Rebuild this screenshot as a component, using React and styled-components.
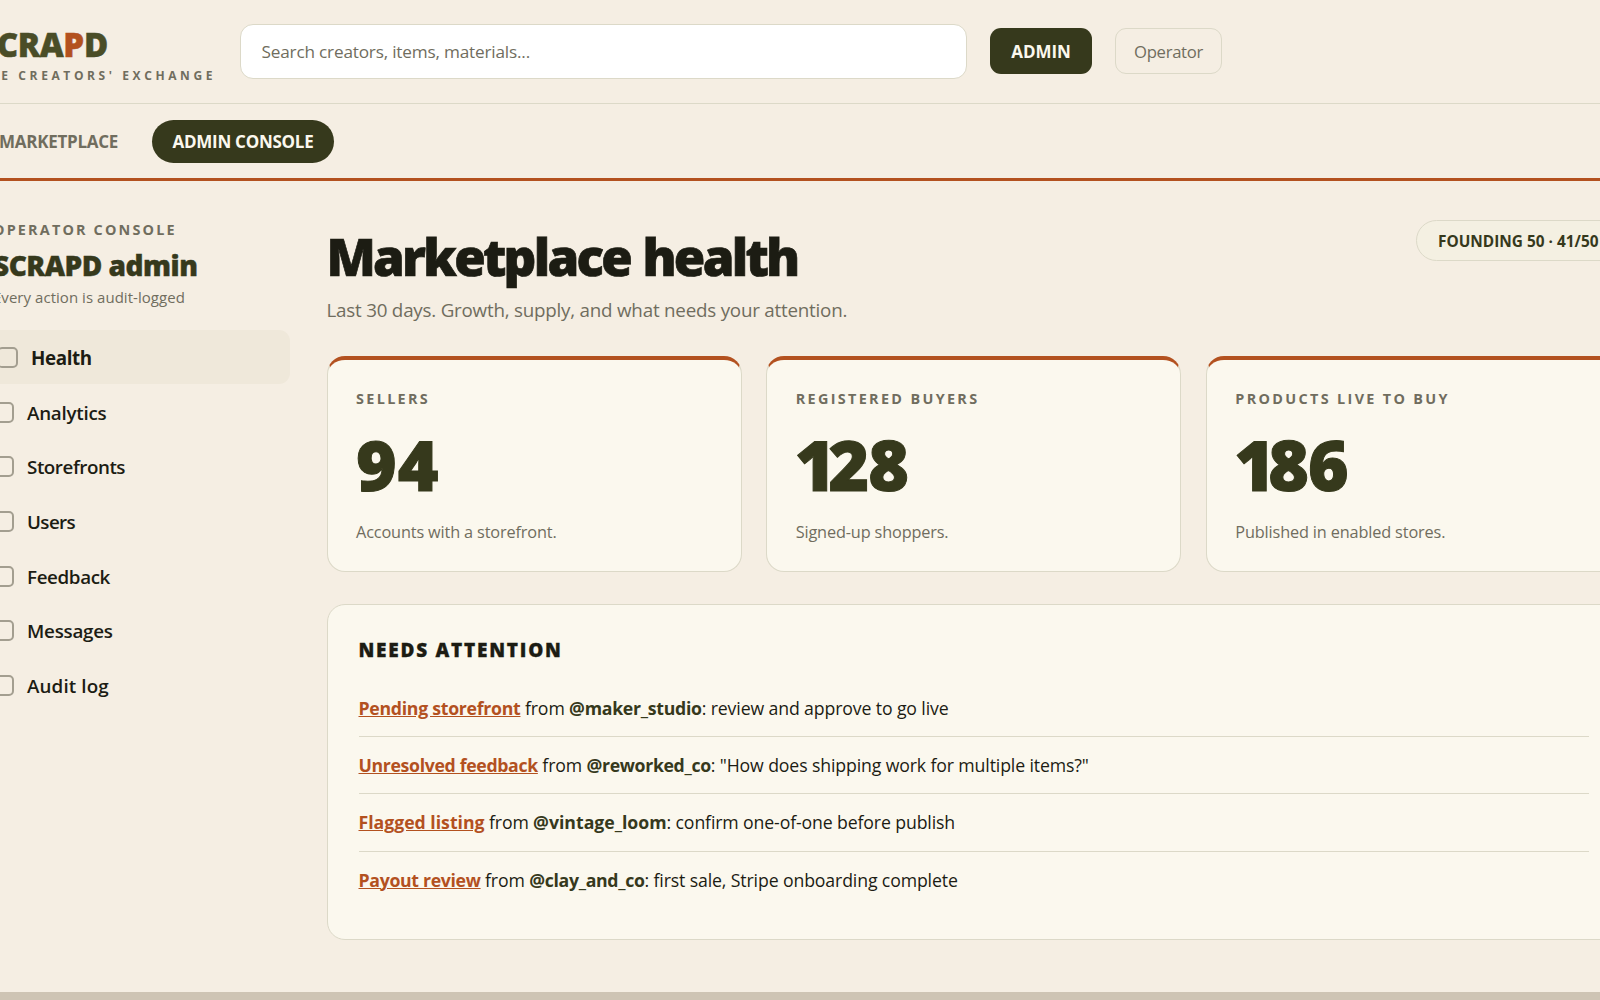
import React from 'react';
import styled, { createGlobalStyle, css } from 'styled-components';

const c = {
  bg: '#f5eee3',
  card: '#fbf8ee',
  ink: '#1c1c13',
  olive: '#36391c',
  moss: '#4a4d27',
  rust: '#b3511f',
  muted: '#706d5e',
  line: '#dcd9c8',
};

const Global = createGlobalStyle`
  *, *::before, *::after { box-sizing: border-box; }
  body {
    margin: 0;
    background: ${c.bg};
    color: ${c.ink};
    font-family: "Open Sans", "Noto Sans", sans-serif;
    overflow: hidden;
  }
`;

const Viewport = styled.div`
  height: 1000px;
  overflow: hidden;
  display: flex;
  flex-direction: column;
`;

const Page = styled.div`
  flex: none;
  width: 1689px;
  height: 992px;
  margin-left: -45px;
`;

const Header = styled.header`
  display: flex;
  align-items: center;
  gap: 23px;
  height: 104px;
  padding: 0 23px;
  border-bottom: 1px solid ${c.line};
`;

const Brand = styled.div`
  width: 238.5px;
  padding-top: 6px;
  white-space: nowrap;
`;

const Logo = styled.div`
  padding-top: 1px;
  font-size: 33px;
  line-height: 36px;
  font-weight: 800;
  letter-spacing: -0.35px;
  color: ${c.moss};
  -webkit-text-stroke: 0.5px;

  em {
    font-style: normal;
    color: ${c.rust};
  }
`;

const Tagline = styled.div`
  margin-top: 5px;
  font-size: 12px;
  line-height: 16px;
  font-weight: 700;
  letter-spacing: 3.6px;
  color: ${c.muted};
`;

const Search = styled.input`
  width: 727.5px;
  height: 55px;
  padding: 0 21px;
  border: 1px solid ${c.line};
  border-radius: 13px;
  background: #fff;
  font: 400 17.2px "Open Sans", "Noto Sans", sans-serif;
  letter-spacing: -0.19px;
  outline: none;

  &::placeholder {
    color: ${c.muted};
    opacity: 1;
  }
`;

const RoleButton = styled.button`
  height: 46px;
  margin-bottom: 1px;
  padding: 1px 0 0;
  border-radius: 11px;
  font: 400 16.7px "Open Sans", "Noto Sans", sans-serif;
  letter-spacing: -0.3px;
  ${(p) =>
    p.$solid
      ? css`
          width: 102px;
          border: 0;
          background: ${c.olive};
          color: ${c.card};
          font-size: 17px;
          font-weight: 700;
          letter-spacing: -0.1px;
        `
      : css`
          width: 107px;
          border: 1px solid ${c.line};
          background: transparent;
          color: ${c.muted};
        `}
`;

const Nav = styled.nav`
  display: flex;
  align-items: center;
  gap: 13px;
  height: 77px;
  padding: 0 23px;
  border-bottom: 3px solid ${c.rust};
`;

const NavLink = styled.a`
  padding: 1px 20.5px 0 21px;
  border-radius: 22px;
  font-size: 17px;
  line-height: 42px;
  font-weight: 700;
  letter-spacing: -0.27px;
  color: ${(p) => (p.$active ? c.card : c.muted)};
  background: ${(p) => (p.$active ? c.olive : 'transparent')};
`;

const Body = styled.div`
  display: grid;
  grid-template-columns: 312px 1294.5px;
  column-gap: 36.5px;
  padding: 39px 23px 0;
`;

const SideHead = styled.div`
  padding-left: 15px;
  white-space: nowrap;
`;

const SideLabel = styled.div`
  font-size: 14.4px;
  line-height: 20px;
  font-weight: 700;
  letter-spacing: 2.18px;
  color: ${c.muted};
`;

const SideTitle = styled.div`
  margin-top: 7px;
  font-size: 28px;
  line-height: 36px;
  font-weight: 800;
  letter-spacing: -0.5px;
  color: ${c.olive};
  -webkit-text-stroke: 0.4px;
`;

const SideNote = styled.div`
  margin-top: 3px;
  font-size: 15px;
  line-height: 22px;
  letter-spacing: 0.04px;
  color: ${c.muted};
`;

const Menu = styled.ul`
  margin: 21.5px 0 0;
  padding: 0;
  list-style: none;
`;

const MenuItem = styled.li`
  display: flex;
  align-items: center;
  gap: 13px;
  height: 54.7px;
  padding: 0 15px;
  border-radius: 11px;
  font-size: 18.8px;
  font-weight: 600;
  letter-spacing: ${(p) => p.$track}px;
  ${(p) =>
    p.$active &&
    css`
      border-left: 4px solid ${c.rust};
      background: #efe8da;
      font-weight: 700;
    `}
`;

const Box = styled.span`
  width: 21px;
  height: 21px;
  margin-top: 1px;
  border: 2px solid #a39e90;
  border-radius: 5px;
`;

const MenuText = styled.span`
  padding-top: 2px;
`;

const MainHead = styled.div`
  display: flex;
  justify-content: space-between;
  align-items: flex-start;
`;

const Title = styled.h1`
  margin: 6px 0 0;
  font-size: 51px;
  line-height: 60px;
  font-weight: 800;
  letter-spacing: -2.75px;
  word-spacing: 2px;
  -webkit-text-stroke: 0.7px;
`;

const Subtitle = styled.p`
  margin: 10px 0 0;
  font-size: 18.8px;
  line-height: 28px;
  letter-spacing: -0.22px;
  color: ${c.muted};
`;

const Pill = styled.div`
  width: 205px;
  height: 41px;
  padding-left: 21px;
  border: 1px solid ${c.line};
  border-radius: 21px;
  background: #f4f0e2;
  font-size: 15.4px;
  line-height: 41px;
  font-weight: 700;
  white-space: nowrap;
  color: ${c.olive};
`;

const Cards = styled.div`
  display: grid;
  grid-template-columns: repeat(3, 1fr);
  gap: 24.5px;
  margin-top: 32px;
`;

const Card = styled.section`
  height: 215.5px;
  padding: 29px 28.5px 0;
  border: 1px solid ${c.line};
  border-top: 4px solid ${c.rust};
  border-radius: 18px;
  background: ${c.card};
`;

const CardLabel = styled.div`
  font-size: 14.4px;
  line-height: 20px;
  font-weight: 700;
  letter-spacing: 2.34px;
  color: ${c.muted};
`;

const CardValue = styled.div`
  margin-top: 20px;
  font-size: 69.5px;
  line-height: 70px;
  font-weight: 800;
  letter-spacing: ${(p) => p.$track}px;
  color: ${c.olive};
  -webkit-text-stroke: 1px;
`;

const LeadOne = styled.span`
  margin-left: -1px;
  letter-spacing: -6.8px;
`;

const CardNote = styled.div`
  margin-top: 21px;
  font-size: 16.3px;
  line-height: 24px;
  letter-spacing: -0.15px;
  color: ${c.muted};
`;

const Panel = styled.section`
  height: 336px;
  margin-top: 32px;
  padding: 32px 31.5px 0 31px;
  border: 1px solid ${c.line};
  border-radius: 18px;
  background: ${c.card};
`;

const PanelTitle = styled.h2`
  margin: 0;
  font-size: 19px;
  line-height: 26px;
  font-weight: 800;
  letter-spacing: 1.75px;
  -webkit-text-stroke: 0.3px;
`;

const TaskList = styled.ul`
  margin: 17.5px 0 0;
  padding: 0;
  list-style: none;
`;

const Task = styled.li`
  height: 57.2px;
  font-size: 17.7px;
  line-height: 57px;
  letter-spacing: -0.13px;
  border-bottom: 1px solid ${c.line};

  &:last-child {
    border-bottom: 0;
  }

  a,
  b {
    font-weight: 700;
    letter-spacing: ${(p) => p.$track}px;
  }

  a {
    color: ${c.rust};
    text-decoration: underline;
    text-decoration-skip-ink: auto;
  }

  b {
    color: ${c.olive};
  }
`;

const Strip = styled.div`
  flex: 1;
  background: #cec4b4;
`;

const menu = [
  ['Health', -0.38],
  ['Analytics', -0.25],
  ['Storefronts', -0.45],
  ['Users', -0.6],
  ['Feedback', -0.38],
  ['Messages', -0.25],
  ['Audit log', 0.12],
];

const stats = [
  { label: 'SELLERS', value: '94', track: 1, note: 'Accounts with a storefront.' },
  { label: 'REGISTERED BUYERS', value: '128', track: -1, note: 'Signed-up shoppers.' },
  { label: 'PRODUCTS LIVE TO BUY', value: '186', track: -1, note: 'Published in enabled stores.' },
];

const tasks = [
  { kind: 'Pending storefront', who: '@maker_studio', text: 'review and approve to go live', track: -0.28 },
  { kind: 'Unresolved feedback', who: '@reworked_co', text: '"How does shipping work for multiple items?"', track: -0.34 },
  { kind: 'Flagged listing', who: '@vintage_loom', text: 'confirm one-of-one before publish', track: -0.02 },
  { kind: 'Payout review', who: '@clay_and_co', text: 'first sale, Stripe onboarding complete', track: -0.32 },
];

function Figure({ value, track }) {
  return (
    <CardValue $track={track}>
      {value[0] === '1' ? (
        <>
          <LeadOne>1</LeadOne>
          {value.slice(1)}
        </>
      ) : (
        value
      )}
    </CardValue>
  );
}

export default function App() {
  return (
    <Viewport>
      <Global />
      <Page>
        <Header>
          <Brand>
            <Logo>
              SCRA<em>P</em>D
            </Logo>
            <Tagline>THE CREATORS' EXCHANGE</Tagline>
          </Brand>
          <Search placeholder="Search creators, items, materials..." />
          <RoleButton $solid>ADMIN</RoleButton>
          <RoleButton>Operator</RoleButton>
        </Header>
        <Nav>
          <NavLink>MARKETPLACE</NavLink>
          <NavLink $active>ADMIN CONSOLE</NavLink>
        </Nav>
        <Body>
          <aside>
            <SideHead>
              <SideLabel>OPERATOR CONSOLE</SideLabel>
              <SideTitle>SCRAPD admin</SideTitle>
              <SideNote>Every action is audit-logged</SideNote>
            </SideHead>
            <Menu>
              {menu.map(([name, track], i) => (
                <MenuItem key={name} $active={i === 0} $track={track}>
                  <Box />
                  <MenuText>{name}</MenuText>
                </MenuItem>
              ))}
            </Menu>
          </aside>
          <main>
            <MainHead>
              <div>
                <Title>Marketplace health</Title>
                <Subtitle>Last 30 days. Growth, supply, and what needs your attention.</Subtitle>
              </div>
              <Pill>FOUNDING 50 · 41/50</Pill>
            </MainHead>
            <Cards>
              {stats.map((s) => (
                <Card key={s.label}>
                  <CardLabel>{s.label}</CardLabel>
                  <Figure value={s.value} track={s.track} />
                  <CardNote>{s.note}</CardNote>
                </Card>
              ))}
            </Cards>
            <Panel>
              <PanelTitle>NEEDS ATTENTION</PanelTitle>
              <TaskList>
                {tasks.map((t) => (
                  <Task key={t.kind} $track={t.track}>
                    <a>{t.kind}</a> from <b>{t.who}</b>: {t.text}
                  </Task>
                ))}
              </TaskList>
            </Panel>
          </main>
        </Body>
      </Page>
      <Strip />
    </Viewport>
  );
}
